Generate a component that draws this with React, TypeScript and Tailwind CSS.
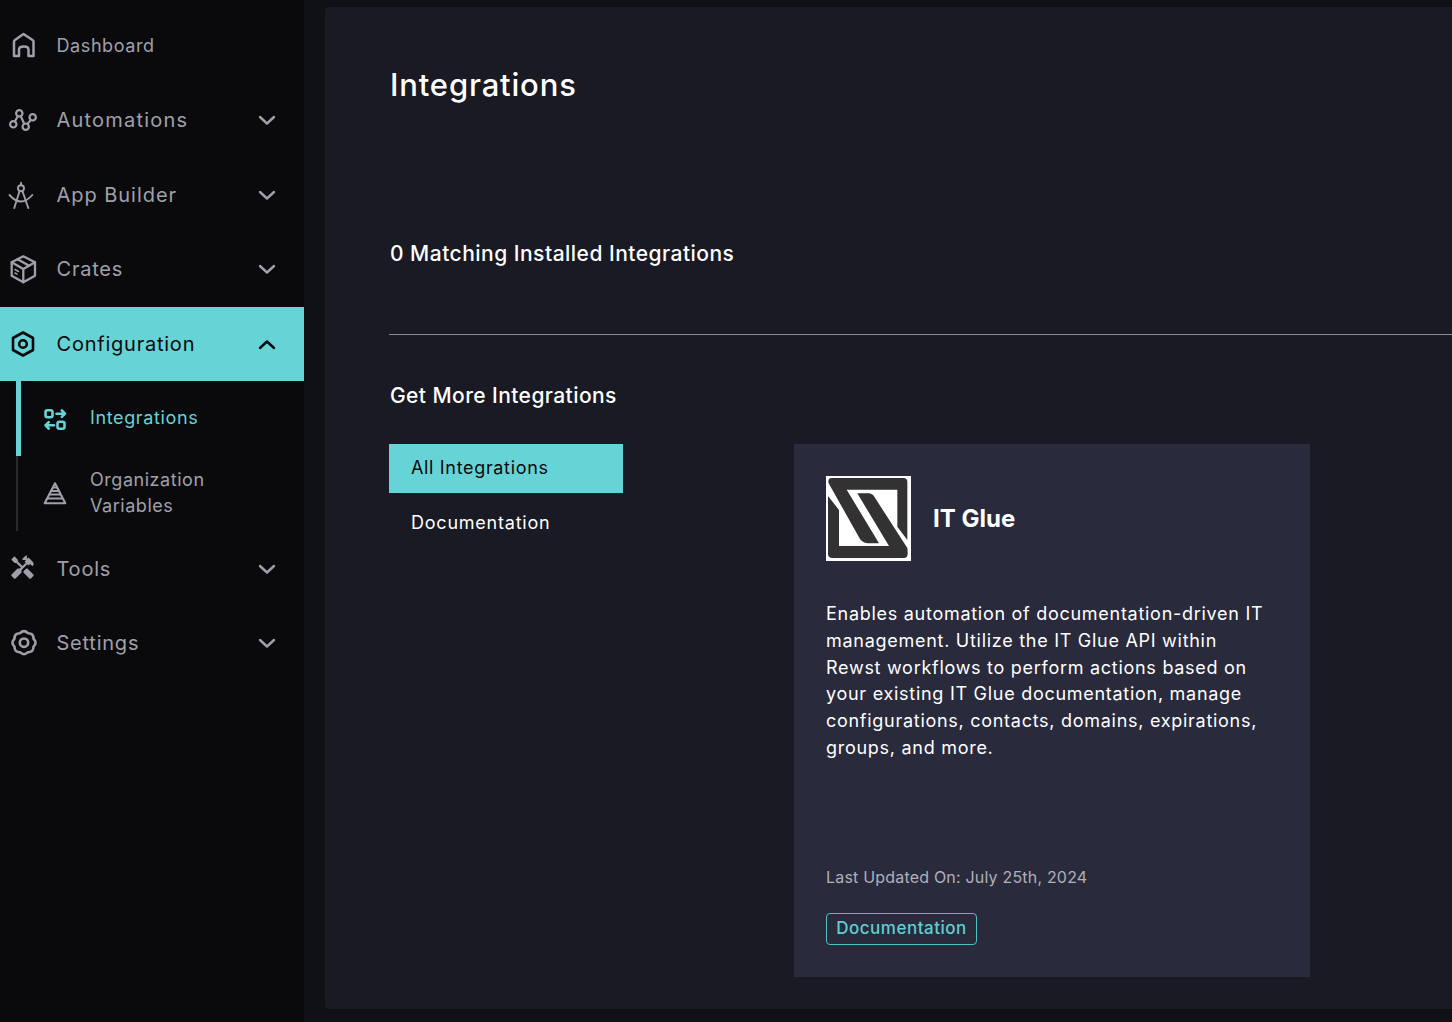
import { ReactNode } from 'react'
import { MdHandyman } from 'react-icons/md'

const FONT = "font-['Inter','Liberation_Sans',sans-serif]"

// scalloped outline for the settings cog
const cogPath = () => {
  const cx = 24
  const cy = 24.7
  let d = ''
  for (let i = 0; i < 8; i++) {
    const a = (i * Math.PI) / 4 - Math.PI / 8
    const b = a + Math.PI / 8
    const c = a + Math.PI / 4
    const p0 = [cx + 10.3 * Math.cos(a), cy + 10.3 * Math.sin(a)]
    const p1 = [cx + 13.6 * Math.cos(b), cy + 13.6 * Math.sin(b)]
    const p2 = [cx + 10.3 * Math.cos(c), cy + 10.3 * Math.sin(c)]
    if (i === 0) d += `M${p0[0].toFixed(2)} ${p0[1].toFixed(2)}`
    d += `Q${p1[0].toFixed(2)} ${p1[1].toFixed(2)} ${p2[0].toFixed(2)} ${p2[1].toFixed(2)}`
  }
  return d + 'Z'
}

const Icon = ({ children, width = 2.2 }: { children: ReactNode; width?: number }) => (
  <svg
    viewBox="0 0 50 50"
    className="w-[50px] h-[50px] shrink-0"
    fill="none"
    stroke="currentColor"
    strokeWidth={width}
    strokeLinecap="round"
    strokeLinejoin="round"
  >
    {children}
  </svg>
)

const Chevron = ({ up }: { up?: boolean }) => (
  <svg viewBox="0 0 18 11" className="w-[18px] h-[11px] ml-auto mr-[28px] mt-px shrink-0" fill="none" stroke="currentColor" strokeWidth={2.4} strokeLinecap="round" strokeLinejoin="round">
    <path d={up ? 'M2 9 9 2.5 16 9' : 'M2 2 9 8.5 16 2'} />
  </svg>
)

const NavRow = ({ icon, label, labelClass, chevron, active }: { icon: ReactNode; label: string; labelClass?: string; chevron?: boolean; active?: boolean }) => (
  <div className={`flex items-center h-[74.67px] ${active ? 'bg-[#66d3d6] text-[#0a0a0d]' : 'text-[#a0a0aa]'}`}>
    {icon}
    <span className={`ml-[6.5px] ${labelClass ?? 'text-[20px] tracking-[0.0385em]'}`}>{label}</span>
    {chevron && <Chevron up={active} />}
  </div>
)

const Sidebar = () => (
  <aside className="w-[304px] shrink-0 bg-[#0a0a0d] pt-[8px]">
    <NavRow
      labelClass="text-[18px] tracking-[0.033em]"
      label="Dashboard"
      icon={
        <Icon width={2.5}>
          <path d="M14 36V21.5Q14 20.5 15 20L23.5 14 32.5 20Q33.5 20.5 33.5 21.5V36H28.5V29.5Q28.5 26.5 24 26.5 19 26.5 19 29.5V36Z" />
        </Icon>
      }
    />
    <NavRow
      chevron
      label="Automations"
      labelClass="text-[20px] tracking-[0.06em]"
      icon={
        <Icon>
          <circle cx="19.3" cy="18.3" r="3.2" />
          <circle cx="13.3" cy="29.3" r="3.2" />
          <circle cx="25.7" cy="31.7" r="3.2" />
          <circle cx="32.7" cy="22.3" r="3.2" />
          <path d="M17.8 21.2 14.8 26.5M20.8 21.2 24.2 28.8M27.5 29 30.8 24.9" />
        </Icon>
      }
    />
    <NavRow
      chevron
      label="App Builder"
      labelClass="text-[20px] tracking-[0.048em]"
      icon={
        <Icon width={1.9}>
          <path d="M21 12.7V15.2" />
          <circle cx="21" cy="18.3" r="3" />
          <path d="M19.6 21 14.3 38M22.4 21 28.3 38M9.5 25Q21 38 32.3 25" />
        </Icon>
      }
    />
    <NavRow
      chevron
      label="Crates"
      icon={
        <Icon width={2.3}>
          <path d="M23.3 12.3 35 18.3V31.7L23.3 38.3 11.7 31.7V18.3Z" />
          <path d="M11.7 18.3 23.3 25 35 18.3M23.3 25V38.3M17.5 15.3 29.2 21.8" />
          <path d="M15 25.5 18.5 27.5M15 29 17 30.1" strokeWidth={1.5} />
        </Icon>
      }
    />
    <NavRow
      active
      chevron
      label="Configuration"
      icon={
        <Icon width={2.6}>
          <path d="M23 13.5 33 19V31L23 36.5 13 31V19Z" />
          <circle cx="23" cy="25" r="3.8" />
        </Icon>
      }
    />
    <div className="ml-[16px]">
      <div className="flex items-center h-[75px] border-l-[5px] border-[#66d3d6] text-[#66d3d6]">
        <div className="ml-[9px]">
          <Icon width={2.6}>
            <rect x="15.5" y="16.2" width="7" height="7" rx="2" />
            <rect x="27.5" y="27.8" width="7" height="7" rx="2" />
            <path d="M26.5 19.7H35M31.8 16.5 35 19.7 31.8 22.9M24 31.3H15.5M18.7 28.1 15.5 31.3 18.7 34.5" />
          </Icon>
        </div>
        <span className="ml-[10px] -mt-[2px] text-[18px] tracking-[0.035em]">Integrations</span>
      </div>
      <div className="flex items-center h-[75px] border-l-2 border-[#2a2a2e] text-[#a0a0aa]">
        <div className="ml-[12px]">
          <Icon width={2.1}>
            <path d="M25 14.3 35.3 34.3H14.7Z" />
            <path d="M23 18.5H27M21.5 22H28.5M20 25.5H30M18 29.5H32" strokeWidth={1.9} />
          </Icon>
        </div>
        <span className="ml-[10px] -mt-[2px] text-[18px] leading-[26px] tracking-[0.03em]">
          Organization
          <br />
          Variables
        </span>
      </div>
    </div>
    <NavRow
      chevron
      label="Tools"
      icon={
        <div className="w-[50px] h-[50px] shrink-0 flex items-center pl-[9px] pb-[2px]">
          <MdHandyman size={27} />
        </div>
      }
    />
    <NavRow
      chevron
      label="Settings"
      icon={
        <Icon width={2.6}>
          <path d={cogPath()} />
          <circle cx="24" cy="24.7" r="4.2" />
        </Icon>
      }
    />
  </aside>
)

const ItGlueLogo = () => (
  <svg viewBox="6 6 255 255" className="w-[85px] h-[85px] shrink-0 bg-white">
    <path fill="#333132" d="M14 28Q10 12 24 12H238Q250 12 250 24V198L220 158V47H68L165 208H130Q115 205 108 195Z" />
    <path fill="#333132" d="M12 66 45 108V216H195L100 58H135Q147 60 152 70L250 222Q252 240 250 245 248 252 236 252H26Q12 252 12 240Z" />
  </svg>
)

const IntegrationCard = () => (
  <div className="w-[516px] shrink-0 bg-[#292a3c] p-[32px]">
    <div className="flex items-center gap-[22px]">
      <ItGlueLogo />
      <h3 className="text-[24px] font-bold text-white">IT Glue</h3>
    </div>
    <p className="mt-[40px] text-[18px] leading-[26.8px] tracking-[0.04em] text-white">
      Enables automation of documentation-driven IT management. Utilize the IT Glue API within Rewst workflows to perform actions based on your existing IT Glue documentation, manage configurations, contacts, domains, expirations, groups, and more.
    </p>
    <div className="mt-[103px] text-[16px] leading-[24px] tracking-[0.012em] text-[#b0b0ba]">Last Updated On: July 25th, 2024</div>
    <button className="block mt-[24px] h-[32px] w-[151px] rounded-[4px] border border-[#4fc0c4] text-[17px] font-medium tracking-[0.029em] text-[#5fcfd2]">
      Documentation
    </button>
  </div>
)

export default function App() {
  return (
    <div className={`${FONT} flex w-[1452px] h-[1022px] overflow-hidden bg-[#101114]`}>
      <Sidebar />
      <main className="flex-1 ml-[21px] mt-[7px] h-[1002px] rounded-tl-[4px] rounded-bl-[4px] bg-[#191a24] pt-[58px] pl-[64px] text-white">
        <h1 className="ml-px text-[31px] leading-[40px] font-medium tracking-[0.027em]">Integrations</h1>
        <h2 className="ml-px mt-[135px] text-[21px] leading-[28px] font-medium tracking-[0.023em]">0 Matching Installed Integrations</h2>
        <hr className="mt-[66px] border-t border-[#8a8a92]" />
        <h2 className="ml-px mt-[47px] text-[21px] leading-[28px] font-medium tracking-[0.02em]">Get More Integrations</h2>
        <div className="flex mt-[34px]">
          <div className="w-[234px] shrink-0 mr-[171px]">
            <div className="flex items-center h-[49px] pb-[2px] pl-[22px] bg-[#66d3d6] text-[#0a0a0d] text-[18px] tracking-[0.037em]">All Integrations</div>
            <div className="flex items-center h-[60px] pb-[2px] pl-[22px] text-[18px] tracking-[0.043em]">Documentation</div>
          </div>
          <IntegrationCard />
        </div>
      </main>
    </div>
  )
}
